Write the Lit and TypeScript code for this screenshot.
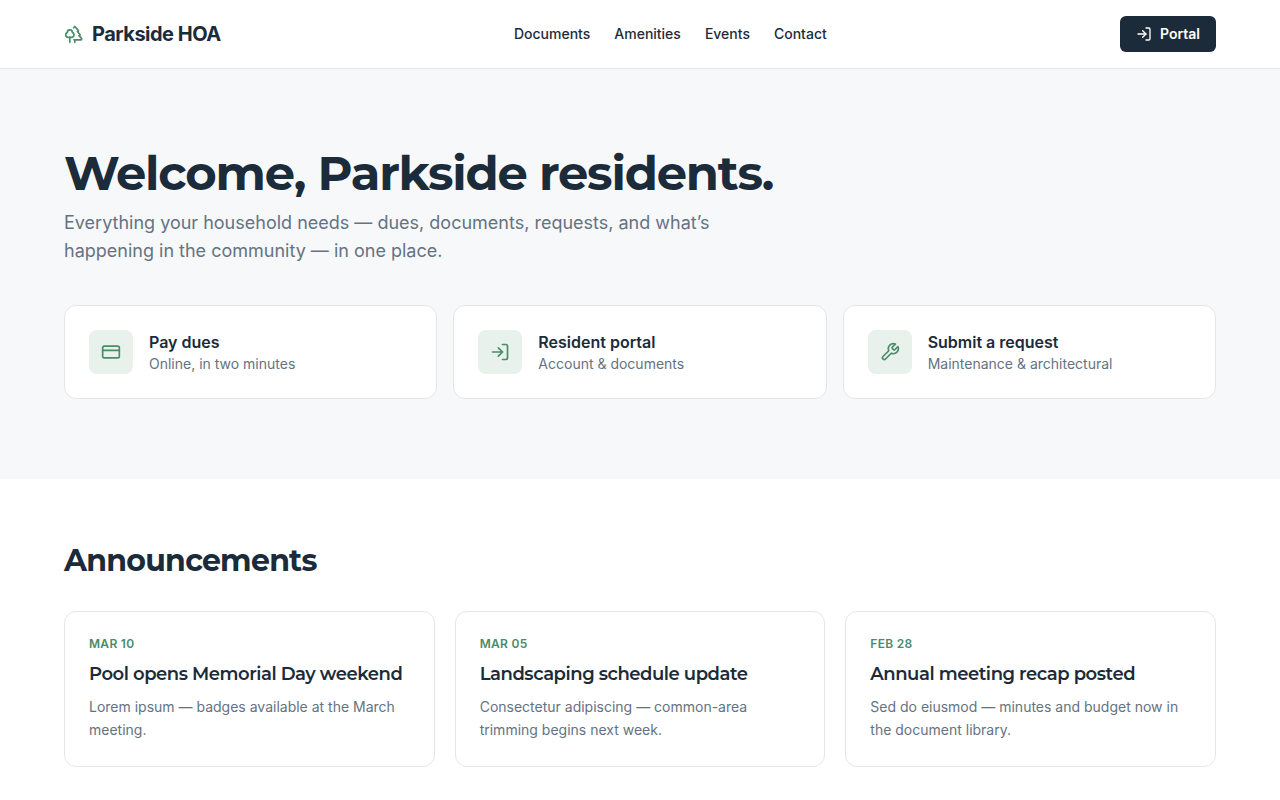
import { LitElement, html, css, svg } from "lit";
import { customElement } from "lit/decorators.js";

const icons = {
  trees: svg`<path d="M10 10v.2A3 3 0 0 1 8.9 16H5a3 3 0 0 1-1-5.8V10a3 3 0 0 1 6 0Z"/><path d="M7 16v6"/><path d="M13 19v3"/><path d="M12 19h8.3a1 1 0 0 0 .7-1.7L18 14h.3a1 1 0 0 0 .7-1.7L16 9h.2a1 1 0 0 0 .8-1.7L13 3l-1.4 1.5"/>`,
  login: svg`<path d="m10 17 5-5-5-5"/><path d="M15 12H3"/><path d="M15 3h4a2 2 0 0 1 2 2v14a2 2 0 0 1-2 2h-4"/>`,
  card: svg`<rect width="20" height="14" x="2" y="5" rx="2"/><path d="M2 10h20"/>`,
  wrench: svg`<path d="M14.7 6.3a1 1 0 0 0 0 1.4l1.6 1.6a1 1 0 0 0 1.4 0l3.77-3.77a6 6 0 0 1-7.94 7.94l-6.91 6.91a2.12 2.12 0 0 1-3-3l6.91-6.91a6 6 0 0 1 7.94-7.94l-3.76 3.76z"/>`,
};

const icon = (name: keyof typeof icons, size: number) => html`<svg
  class="icon" width=${size} height=${size} viewBox="0 0 24 24" fill="none"
  stroke="currentColor" stroke-width="2" stroke-linecap="round" stroke-linejoin="round"
>${icons[name]}</svg>`;

const actions = [
  { icon: "card", title: "Pay dues", text: "Online, in two minutes" },
  { icon: "login", title: "Resident portal", text: "Account & documents" },
  { icon: "wrench", title: "Submit a request", text: "Maintenance & architectural" },
] as const;

const news = [
  { date: "MAR 10", title: "Pool opens Memorial Day weekend", text: "Lorem ipsum — badges available at the March meeting." },
  { date: "MAR 05", title: "Landscaping schedule update", text: "Consectetur adipiscing — common-area trimming begins next week." },
  { date: "FEB 28", title: "Annual meeting recap posted", text: "Sed do eiusmod — minutes and budget now in the document library." },
];

@customElement("app-root")
export class AppRoot extends LitElement {
  static styles = css`
    :host { display: block; background: #fff; color: #1c2b3a; font-family: Inter, "Liberation Sans", sans-serif; font-size: 16px; line-height: 24px; }
    * { box-sizing: border-box; margin: 0; }
    .icon { display: block; flex: none; }
    .header { display: flex; align-items: center; justify-content: space-between; height: 69px; padding: 0 64px; border-bottom: 1px solid #e4e6e9; }
    .brand { display: flex; align-items: center; gap: 8px; font-size: 20px; font-weight: 700; line-height: 28px; letter-spacing: -0.5px; }
    .brand .icon { color: #4a8b68; }
    .nav { display: flex; gap: 24px; font-size: 14px; font-weight: 500; line-height: 20px; }
    .portal { display: flex; align-items: center; gap: 8px; height: 36px; padding: 0 16px; border-radius: 6px; background: #1c2b3a; color: #fff; font-size: 14px; font-weight: 600; line-height: 20px; }
    .hero { background: #f7f8fa; padding: 80px 64px; }
    .welcome, .heading, .title { font-family: Montserrat, Inter, sans-serif; }
    .welcome { font-size: 48px; line-height: 48px; font-weight: 700; letter-spacing: -1.2px; }
    .lead { margin-top: 12px; max-width: 672px; font-size: 18px; line-height: 28px; color: #647382; }
    .actions { display: grid; grid-template-columns: repeat(3, 1fr); gap: 16px; margin-top: 40px; }
    .action { display: flex; align-items: center; gap: 16px; padding: 24px; background: #fff; border: 1px solid #e4e6e9; border-radius: 12px; }
    .tile { display: grid; place-items: center; width: 44px; height: 44px; border-radius: 8px; background: #e8f1ec; color: #4a8b68; }
    .name { font-weight: 600; }
    .note { font-size: 14px; line-height: 20px; color: #647382; }
    .announcements { padding: 64px 64px 33px; }
    .heading { font-size: 30px; line-height: 36px; font-weight: 700; letter-spacing: -0.75px; }
    .news { display: grid; grid-template-columns: repeat(3, 1fr); gap: 20px; margin-top: 32px; }
    .item { padding: 24px; border: 1px solid #e4e6e9; border-radius: 12px; }
    .date { font-size: 12px; line-height: 16px; font-weight: 600; letter-spacing: 0.3px; color: #4a8b68; }
    .title { margin-top: 8px; font-size: 18px; line-height: 28px; font-weight: 600; letter-spacing: -0.45px; white-space: nowrap; }
    .text { margin-top: 8px; font-size: 14px; line-height: 22.75px; color: #647382; }
  `;

  render() {
    return html`
      <header class="header">
        <div class="brand">${icon("trees", 20)}<span>Parkside HOA</span></div>
        <nav class="nav"><span>Documents</span><span>Amenities</span><span>Events</span><span>Contact</span></nav>
        <div class="portal">${icon("login", 16)}<span>Portal</span></div>
      </header>
      <section class="hero">
        <h1 class="welcome">Welcome, Parkside residents.</h1>
        <p class="lead">Everything your household needs — dues, documents, requests, and what’s happening in the community — in one place.</p>
        <div class="actions">
          ${actions.map((a) => html`<div class="action">
            <div class="tile">${icon(a.icon, 20)}</div>
            <div><div class="name">${a.title}</div><div class="note">${a.text}</div></div>
          </div>`)}
        </div>
      </section>
      <section class="announcements">
        <h2 class="heading">Announcements</h2>
        <div class="news">
          ${news.map((n) => html`<article class="item">
            <div class="date">${n.date}</div>
            <h3 class="title">${n.title}</h3>
            <p class="text">${n.text}</p>
          </article>`)}
        </div>
      </section>
    `;
  }
}
